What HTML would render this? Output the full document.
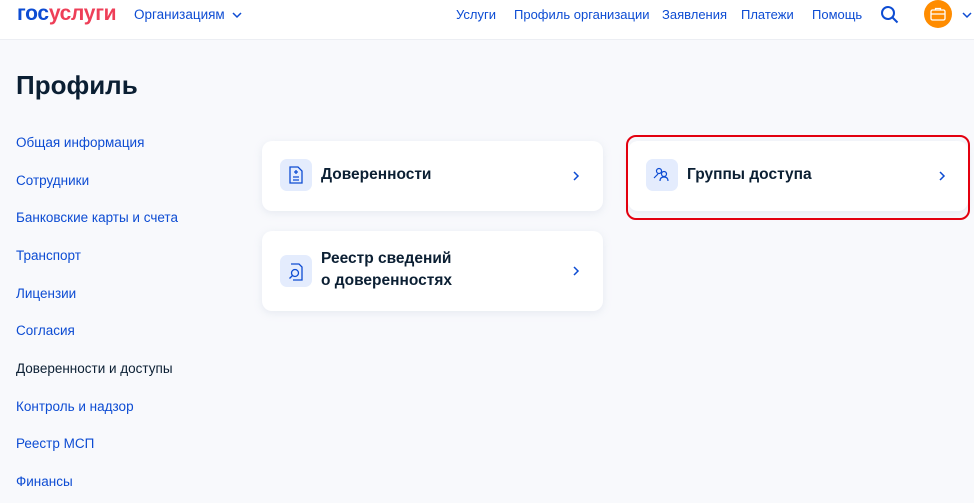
<!DOCTYPE html>
<html><head><meta charset="utf-8"><style>
*{margin:0;padding:0;box-sizing:border-box}
body{width:974px;height:503px;overflow:hidden;background:#f8f9fc;font-family:"Liberation Sans",sans-serif;position:relative}
.hdr{position:absolute;left:0;top:0;width:974px;height:40px;background:#fff;border-bottom:1px solid #eceef3}
.logo{position:absolute;left:17px;top:2px;font-size:21px;font-weight:bold;letter-spacing:-0.3px}
.nav{position:absolute;top:7px;font-size:13px;color:#0d4cd3;white-space:nowrap}
h1{position:absolute;left:16px;top:70px;font-size:26px;font-weight:bold;color:#0b1f33}
.side{position:absolute;left:16px;font-size:13.5px;color:#0d4cd3}
.card{position:absolute;background:#fff;border-radius:10px;box-shadow:0 2px 8px rgba(180,190,210,.25)}
.ic{position:absolute;left:18px;width:32px;height:32px;border-radius:7px;background:#e4ecfd}
.t{position:absolute;left:59px;font-size:15.5px;font-weight:bold;color:#0b1f33;line-height:22px}
.ch{position:absolute}
</style></head><body>
<div class="hdr">
<div class="logo"><span style="color:#0d4cd3">гос</span><span style="color:#ee3f58">услуги</span></div>
<div class="nav" style="left:134px;font-size:13.5px">Организациям <svg width="10" height="8" viewBox="0 0 10 8" style="margin-left:4px"><path d="M1 2l4 4 4-4" fill="none" stroke="#0d4cd3" stroke-width="1.5"/></svg></div>
<div class="nav" style="left:456px">Услуги</div>
<div class="nav" style="left:514px">Профиль организации</div>
<div class="nav" style="left:662px">Заявления</div>
<div class="nav" style="left:741px">Платежи</div>
<div class="nav" style="left:812px">Помощь</div>
<svg style="position:absolute;left:880px;top:5px" width="20" height="20" viewBox="0 0 20 20"><circle cx="8" cy="8" r="6" fill="none" stroke="#0d4cd3" stroke-width="2"/><path d="M12.5 12.5l5 5" stroke="#0d4cd3" stroke-width="2"/></svg>
<div style="position:absolute;left:924px;top:0;width:28px;height:28px;border-radius:50%;background:#ff8c00"></div>
<svg style="position:absolute;left:929px;top:5px" width="18" height="18" viewBox="0 0 18 18"><rect x="2" y="5" width="14" height="10" rx="1.5" fill="none" stroke="#fff" stroke-width="1.3"/><path d="M6.5 5V3.5h5V5M2 9h14" fill="none" stroke="#fff" stroke-width="1.3"/></svg>
<svg style="position:absolute;left:962px;top:11px" width="10" height="8" viewBox="0 0 10 8"><path d="M1 2l4 4 4-4" fill="none" stroke="#0d4cd3" stroke-width="1.5"/></svg>
</div>
<h1>Профиль</h1>
<div class="side" style="top:135px">Общая информация</div>
<div class="side" style="top:173px">Сотрудники</div>
<div class="side" style="top:210px">Банковские карты и счета</div>
<div class="side" style="top:248px">Транспорт</div>
<div class="side" style="top:286px">Лицензии</div>
<div class="side" style="top:323px">Согласия</div>
<div class="side" style="top:361px;color:#0b1f33">Доверенности и доступы</div>
<div class="side" style="top:399px">Контроль и надзор</div>
<div class="side" style="top:436px">Реестр МСП</div>
<div class="side" style="top:474px">Финансы</div>

<div class="card" style="left:262px;top:141px;width:341px;height:70px">
<div class="ic" style="top:18px"><svg width="32" height="32" viewBox="0 0 32 32"><path d="M10 8h8l4 4v12h-12z" fill="none" stroke="#0d4cd3" stroke-width="1.3"/><path d="M16 11v4M14 13h4M13 18h6M13 21h6" stroke="#0d4cd3" stroke-width="1.3"/></svg></div>
<div class="t" style="top:23px">Доверенности</div><svg class="ch" style="left:310px;top:30px" width="8" height="10" viewBox="0 0 8 10"><path d="M2 1l4 4-4 4" fill="none" stroke="#0d4cd3" stroke-width="1.5"/></svg></div>
<div class="card" style="left:262px;top:231px;width:341px;height:80px">
<div class="ic" style="top:24px"><svg width="32" height="32" viewBox="0 0 32 32"><path d="M11 9h8l3 3v13h-9" fill="none" stroke="#0d4cd3" stroke-width="1.3"/><circle cx="15" cy="18" r="3.5" fill="none" stroke="#0d4cd3" stroke-width="1.3"/><path d="M12.5 20.5l-3 3" stroke="#0d4cd3" stroke-width="1.3"/></svg></div>
<div class="t" style="top:17px">Реестр сведений<br>о доверенностях</div><svg class="ch" style="left:310px;top:35px" width="8" height="10" viewBox="0 0 8 10"><path d="M2 1l4 4-4 4" fill="none" stroke="#0d4cd3" stroke-width="1.5"/></svg></div>
<div class="card" style="left:628px;top:141px;width:340px;height:70px">
<div class="ic" style="top:18px"><svg width="32" height="32" viewBox="0 0 32 32"><circle cx="13" cy="12" r="2.5" fill="none" stroke="#0d4cd3" stroke-width="1.2"/><circle cx="18" cy="15" r="2.5" fill="none" stroke="#0d4cd3" stroke-width="1.2"/><path d="M8 19l4-4M14 22c0-3 2-4 4-4s4 1 4 4" fill="none" stroke="#0d4cd3" stroke-width="1.2"/></svg></div>
<div class="t" style="top:23px">Группы доступа</div><svg class="ch" style="left:310px;top:30px" width="8" height="10" viewBox="0 0 8 10"><path d="M2 1l4 4-4 4" fill="none" stroke="#0d4cd3" stroke-width="1.5"/></svg></div>
<div style="position:absolute;left:626px;top:135px;width:344px;height:85px;border:2.5px solid #e3000f;border-radius:10px"></div>
</body></html>
